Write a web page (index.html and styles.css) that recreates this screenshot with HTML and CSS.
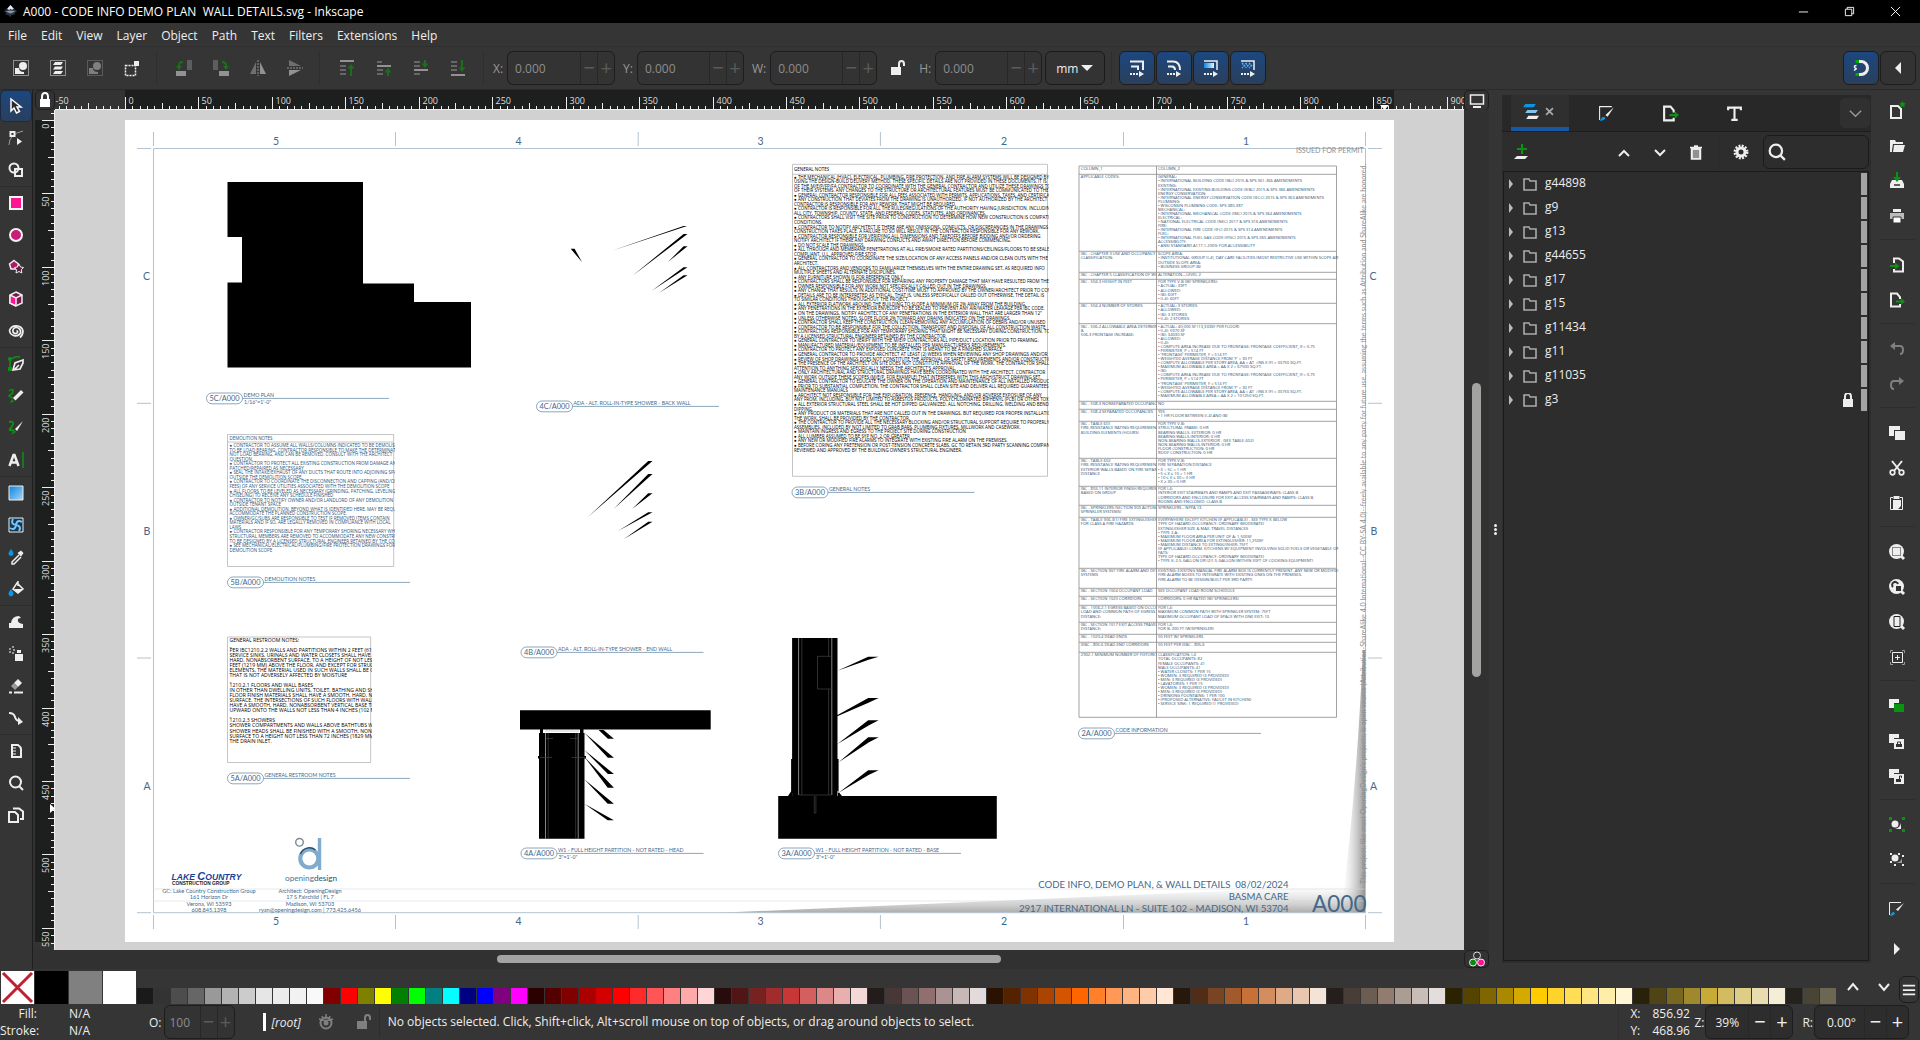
FILE: index.html
```html
<!DOCTYPE html>
<html lang="en">
<head>
<meta charset="utf-8">
<title>A000 - CODE INFO DEMO PLAN  WALL DETAILS.svg - Inkscape</title>
<link rel="stylesheet" href="styles.css">
</head>
<body>
<header class="titlebar">
  <svg class="app-logo" viewBox="0 0 16 16"><path d="M8 1 14.500 7.500Q15 9 12 9.500L13 11 9 12 8 14 6 12 2 11 4 9.500Q1 9 1.500 7.500Z" fill="#2c3440"/><path d="M8 1 11.500 5 9.500 6 8 5 6.500 6.500 4.500 5Z" fill="#e8edf2"/><path d="M3 8Q8 6 13 8L8 10Z" fill="#8796ab"/></svg>
  <h1>A000 - CODE INFO DEMO PLAN&nbsp; WALL DETAILS.svg - Inkscape</h1>
  <div class="win-buttons">
    <button aria-label="Minimize"><svg viewBox="0 0 12 12"><path d="M1 6.500H11" stroke="#fff"/></svg></button>
    <button aria-label="Restore"><svg viewBox="0 0 12 12"><path d="M1.500 3.500h7v7h-7zM3.500 3.500v-2h7v7h-2" fill="none" stroke="#fff"/></svg></button>
    <button aria-label="Close"><svg viewBox="0 0 12 12"><path d="M1 1 11 11M11 1 1 11" stroke="#fff"/></svg></button>
  </div>
</header>
<nav class="menubar">
  <button>File</button><button>Edit</button><button>View</button><button>Layer</button><button>Object</button><button>Path</button><button>Text</button><button>Filters</button><button>Extensions</button><button>Help</button>
</nav>

<div class="toolbar">
  <div class="group">
    <button aria-label="Select all"><svg viewBox="0 0 16 16"><path d="M.500.500h15v15H.500z" fill="none" stroke="#eee" stroke-dasharray="1 1"/><circle cx="10" cy="6" r="4" fill="#eee"/><path d="M2 8h4q0 4 5 4v2H2z" fill="#eee"/></svg></button>
    <button aria-label="Select in layers"><svg viewBox="0 0 16 16"><path d="M.500.500h15v15H.500z" fill="none" stroke="#eee" stroke-dasharray="1 1"/><path d="M5 2h8l-2 3H3zM5 6.500h8l-2 3H3zM5 11h8l-2 3H3z" fill="#eee"/></svg></button>
    <button class="dim" aria-label="Deselect"><svg viewBox="0 0 16 16"><path d="M.500.500h15v15H.500z" fill="none" stroke="#eee" stroke-dasharray="1 1"/><circle cx="10" cy="6" r="4" fill="#eee"/><path d="M2 8h4q0 4 5 4v2H2z" fill="#eee"/></svg></button>
    <button aria-label="Touch selection"><svg viewBox="0 0 16 16"><path d="M1.500 5.500h10v10h-10z" fill="none" stroke="#eee" stroke-width="1.500" stroke-dasharray="2 1"/><path d="M10 1h5v5h-5z" fill="#eee"/></svg></button>
  </div>
  <div class="group dim">
    <button aria-label="Rotate left"><svg viewBox="0 0 16 16"><path d="M11 0h5v10h-5z" fill="#888"/><path d="M0 11h10v5H0z" fill="#eee"/><path d="M3 9V5q0-3 4-3" fill="none" stroke="#0a0" stroke-width="2"/><path d="M0 6h6L3 10z" fill="#0a0"/></svg></button>
    <button aria-label="Rotate right"><svg viewBox="0 0 16 16"><path d="M0 0h5v10H0z" fill="#888"/><path d="M6 11h10v5H6z" fill="#eee"/><path d="M13 9V5q0-3-4-3" fill="none" stroke="#0a0" stroke-width="2"/><path d="M10 6h6l-3 4z" fill="#0a0"/></svg></button>
    <button aria-label="Flip horizontally"><svg viewBox="0 0 16 16"><path d="M6 2v12H0z" fill="#aaa"/><path d="M10 2v12h6z" fill="#eee"/><path d="M8 0v16" stroke="#eee" stroke-dasharray="2 1"/></svg></button>
    <button aria-label="Flip vertically"><svg viewBox="0 0 16 16"><path d="M2 6h12L2 0z" fill="#aaa"/><path d="M2 10h12L2 16z" fill="#eee"/><path d="M0 8h16" stroke="#eee" stroke-dasharray="2 1"/></svg></button>
  </div>
  <div class="group dim">
    <button aria-label="Raise to top"><svg viewBox="0 0 16 16"><path d="M1 1h14" stroke="#eee" stroke-width="2"/><path d="M1 6h6M1 10h6M1 14h6" stroke="#999" stroke-width="2"/><path d="M12 16V7" stroke="#0a0" stroke-width="2"/><path d="M8.500 8.500h7L12 4z" fill="#0a0"/></svg></button>
    <button aria-label="Raise"><svg viewBox="0 0 16 16"><path d="M1 2h5M1 10h6M1 14h6" stroke="#999" stroke-width="2"/><path d="M1 6h14" stroke="#eee" stroke-width="2"/><path d="M12 16v-4" stroke="#0a0" stroke-width="2"/><path d="M8.500 12.500h7L12 8z" fill="#0a0"/></svg></button>
    <button aria-label="Lower"><svg viewBox="0 0 16 16"><path d="M1 2h6M1 6h6M1 14h6" stroke="#999" stroke-width="2"/><path d="M1 10h14" stroke="#eee" stroke-width="2"/><path d="M12 0v4" stroke="#0a0" stroke-width="2"/><path d="M8.500 3.500h7L12 8z" fill="#0a0"/></svg></button>
    <button aria-label="Lower to bottom"><svg viewBox="0 0 16 16"><path d="M1 2h6M1 6h6M1 10h6" stroke="#999" stroke-width="2"/><path d="M1 15h14" stroke="#eee" stroke-width="2"/><path d="M12 0v9" stroke="#0a0" stroke-width="2"/><path d="M8.500 7.500h7L12 12z" fill="#0a0"/></svg></button>
  </div>
  <div class="group coords">
    <label for="px">X:</label><div class="spin off"><input id="px" value="0.000"><button aria-label="Less">&minus;</button><button aria-label="More">+</button></div>
    <label for="py">Y:</label><div class="spin off"><input id="py" value="0.000"><button aria-label="Less">&minus;</button><button aria-label="More">+</button></div>
    <label for="pw">W:</label><div class="spin off"><input id="pw" value="0.000"><button aria-label="Less">&minus;</button><button aria-label="More">+</button></div>
    <button class="ratio" aria-label="Lock ratio"><svg viewBox="0 0 16 16"><path d="M1 7h10v8H1z" fill="#eee"/><path d="M9 8V4q0-3 2.500-3T14 4v2" fill="none" stroke="#eee" stroke-width="2"/></svg></button>
    <label for="ph">H:</label><div class="spin off"><input id="ph" value="0.000"><button aria-label="Less">&minus;</button><button aria-label="More">+</button></div>
    <div class="unit"><select aria-label="Unit"><option>mm</option></select></div>
  </div>
  <div class="group toggles">
    <button class="on" aria-label="Scale stroke"><svg viewBox="0 0 16 16"><path d="M1 1.500h13V10M2 6.500h7V10" fill="none" stroke="#eee" stroke-width="2"/><path d="M1 14h9" stroke="#eee" stroke-width="2" stroke-dasharray="2 1"/><path d="M10 11v6l5-3z" fill="#eee"/></svg></button>
    <button class="on" aria-label="Scale corners"><svg viewBox="0 0 16 16"><path d="M1 1.500h6q7 0 7 8.500M2 6.500h4q3 0 3 3.500" fill="none" stroke="#eee" stroke-width="2"/><path d="M1 14h9" stroke="#eee" stroke-width="2" stroke-dasharray="2 1"/><path d="M10 11v6l5-3z" fill="#eee"/></svg></button>
    <button class="on" aria-label="Move gradients"><svg viewBox="0 0 16 16"><defs><linearGradient id="ga"><stop stop-color="#0a8ae6"/><stop offset="1" stop-color="#e6f2fb"/></linearGradient></defs><path d="M1 1h13v9" fill="none" stroke="#eee" stroke-width="1.500"/><path d="M1 3h10v5H1z" fill="url(#ga)"/><path d="M1 14h9" stroke="#eee" stroke-width="2" stroke-dasharray="2 1"/><path d="M10 11v6l5-3z" fill="#eee"/></svg></button>
    <button class="on" aria-label="Move patterns"><svg viewBox="0 0 16 16"><path d="M1 1h13v9" fill="none" stroke="#eee" stroke-width="1.500"/><path d="M2 3l2.500 2.500L2 8M5.500 3 8 5.500 5.500 8M9 3l2.500 2.500L9 8" fill="none" stroke="#5bb8f5" stroke-width="1.500" stroke-dasharray="2 1"/><path d="M1 14h9" stroke="#eee" stroke-width="2" stroke-dasharray="2 1"/><path d="M10 11v6l5-3z" fill="#eee"/></svg></button>
  </div>
  <div class="snap">
    <button class="on" aria-label="Snapping"><svg viewBox="0 0 16 16"><path d="M6 1.500h2a6.500 6.500 0 0 1 0 13H6" fill="none" stroke="#eee" stroke-width="3"/><path d="M2.500 0h3.500v3H2.500zM2.500 13h3.500v3H2.500z" fill="#0a0"/><path d="M3.500 5.500Q1 5.500 1.500 7T3 8.500 1 10.500" fill="none" stroke="#eee" stroke-width="1.500"/></svg></button>
    <button class="plain" aria-label="Snap options"><svg viewBox="0 0 16 16"><path d="M11 2v12L5 8z" fill="#eee"/></svg></button>
  </div>
</div>

<main class="workspace">
  <div class="toolbox">
    <div class="set">
      <button class="on" aria-label="Selector"><svg viewBox="0 0 16 16"><path d="M3 1v12l3-3 2.500 5 3-1.500L9 9h4z" fill="#2a2a2a" stroke="#fff" stroke-width="1.500"/></svg></button>
      <button aria-label="Node"><svg viewBox="0 0 16 16"><path d="M1 15Q1 4 15 1" fill="none" stroke="#999"/><path d="M2.500 2h4v4h-4z" fill="#333" stroke="#eee" stroke-width="2"/><path d="M9 8v7l5-3.500z" fill="#eee"/></svg></button>
      <button aria-label="Shape builder"><svg viewBox="0 0 16 16"><circle cx="6" cy="6" r="4.500" fill="none" stroke="#eee" stroke-width="2"/><path d="M7 7h7v7H7z" fill="none" stroke="#eee" stroke-width="2"/></svg></button>
    </div>
    <div class="set">
      <button aria-label="Rectangle"><svg viewBox="0 0 16 16"><rect x="2" y="2" width="12" height="12" fill="#ff1493" stroke="#f4f4f4" stroke-width="2"/></svg></button>
      <button aria-label="Ellipse"><svg viewBox="0 0 16 16"><circle cx="8" cy="8" r="6" fill="#c81d78" stroke="#f4f4f4" stroke-width="2"/></svg></button>
      <button aria-label="Star"><svg viewBox="0 0 16 16"><path d="M6 1.500 10.500 5 9 10H3L1.500 5Z" fill="#ab1a69" stroke="#eee" stroke-width="1.500"/><path d="m11 5 1.500 3 3 .500-2.200 2.300.500 3.200-2.800-1.500L8 14l.500-3.200L6.500 8.500l3-.500z" fill="#5a2342" stroke="#eee"/></svg></button>
      <button aria-label="3D box"><svg viewBox="0 0 16 16"><path d="m8 1 6 3v8l-6 3-6-3V4z" fill="#7a1a4d" stroke="#eee" stroke-width="1.500"/><path d="m2 4 6 3v8l-6-3z" fill="#ff1493"/><path d="m2 4 6 3 6-3M8 7v8M2 4v8l6 3" fill="none" stroke="#eee" stroke-width="1.500"/></svg></button>
      <button aria-label="Spiral"><svg viewBox="0 0 16 16"><path d="M12 14.500Q15 12 15 8A7 6.500 0 0 0 1.500 7.500a6 6 0 0 0 11 2.500A4.500 4.500 0 0 0 8 4.500 3.500 3.500 0 0 0 5 9q1.500 2.500 4 1 1.500-1.500-.500-2.500" fill="none" stroke="#eee" stroke-width="1.700"/></svg></button>
    </div>
    <div class="set">
      <button aria-label="Pen"><svg viewBox="0 0 16 16"><path d="M2 12V3M4 2.500Q8 0 12 1" fill="none" stroke="#0a9310" stroke-width="1.500"/><path d="M0 11h4v4H0z" fill="#0a9310"/><circle cx="2" cy="3" r="2" fill="#0a9310"/><path d="m15 4-8 3-2 7 7-1 3-6zM6 14l5-5" fill="#333" stroke="#eee" stroke-width="1.700"/></svg></button>
      <button aria-label="Pencil"><svg viewBox="0 0 16 16"><path d="M1 3q4-3 4 0T2 7t3 3" fill="none" stroke="#0a9310" stroke-width="1.500"/><path d="M13 2l2.500 2.500-8 8L5 10z" fill="#eee"/><path d="m4 11 2 2.500L2 15z" fill="#0a9310"/></svg></button>
      <button aria-label="Calligraphy"><svg viewBox="0 0 16 16"><path d="M1 2q5-1 4 2T2 9t4 1" fill="none" stroke="#0a9310" stroke-width="1.800"/><path d="M15 1 9 11l-2-2z" fill="#eee"/><path d="m6 10 2 2-5 3z" fill="#0a9310"/></svg></button>
      <button aria-label="Text"><svg viewBox="0 0 16 16"><path d="M15 0v16" stroke="#0a9310" stroke-width="1.500"/><path d="M1.500 14 5.500 3h1l4 11M3 10.500h6" fill="none" stroke="#eee" stroke-width="2.500"/></svg></button>
    </div>
    <div class="set">
      <button aria-label="Gradient"><svg viewBox="0 0 16 16"><defs><linearGradient id="gb" x2="1" y2="1"><stop stop-color="#0a84dd"/><stop offset="1" stop-color="#a9d5f5"/></linearGradient></defs><path d="M1 1h14v14H1z" fill="url(#gb)" stroke="#eee"/></svg></button>
      <button aria-label="Mesh"><svg viewBox="0 0 16 16"><path d="M1 1h14v14H1z" fill="#123a55" stroke="#eee"/><path d="M8 8Q2 7 5 2M8 8Q9 2 14 5M8 8q6 1 3 6M8 8Q7 14 2 11" fill="none" stroke="#7cc4f3" stroke-width="2"/></svg></button>
      <button aria-label="Dropper"><svg viewBox="0 0 16 16"><path d="M3 0q5 6 0 7-5-1 0-7" fill="#0a96e6"/><path d="m11 6-7 7v2h2l7-7" fill="none" stroke="#eee" stroke-width="1.500"/><path d="M13 1.500 15.500 4 13 7.500 9.500 4z" fill="#eee"/></svg></button>
      <button aria-label="Paint bucket"><svg viewBox="0 0 16 16"><path d="M3 8q5 6 0 7.500Q-2 14 3 8" fill="#0a96e6"/><path d="m9 2 6 6-5 4-5-4zM10 0v5" fill="none" stroke="#eee" stroke-width="1.500"/><path d="M6 8h9l-5 4z" fill="#eee"/></svg></button>
    </div>
    <div class="set">
      <button aria-label="Tweak"><svg viewBox="0 0 16 16"><path d="M1 14V9h2q1-7 8-7l2 2q-4 0-3 3 0 2 5 3v4z" fill="#eee"/></svg></button>
      <button aria-label="Spray"><svg viewBox="0 0 16 16"><path d="M7 8h8v7H7zM9 4h4v3H9z" fill="#eee"/><path d="M1 3h2M4 1h2M5 4h2M1 6h2M4 7h2" stroke="#999" stroke-width="2"/></svg></button>
      <button aria-label="Eraser"><svg viewBox="0 0 16 16"><path d="m10 1 4 4-4 4-4-4z" fill="#eee"/><path d="m6 5 4 4-3 3-4-4z" fill="#999"/><path d="M1 14.500h3M6 14.500h9" stroke="#eee" stroke-width="2"/></svg></button>
      <button aria-label="Connector"><svg viewBox="0 0 16 16"><path d="M1 3q5 0 6 4t5 4" fill="none" stroke="#eee" stroke-width="2"/><path d="M10 7v8l5-3z" fill="#eee"/></svg></button>
    </div>
    <div class="set">
      <button aria-label="Measure"><svg viewBox="0 0 16 16"><path d="M4 2h6q3 2 3 4v8H4z" fill="none" stroke="#eee" stroke-width="2"/><path d="M4 5h4M4 8h4M4 11h4" stroke="#eee"/></svg></button>
      <button aria-label="Zoom"><svg viewBox="0 0 16 16"><circle cx="7.500" cy="7" r="5.500" fill="none" stroke="#eee" stroke-width="2"/><path d="m11 11 4 4" stroke="#eee" stroke-width="2"/></svg></button>
      <button aria-label="Pages"><svg viewBox="0 0 16 16"><path d="M1 5h6l3 3v7H1zM5 1.500h6l4 3V12h-3" fill="none" stroke="#eee" stroke-width="2"/></svg></button>
    </div>
  </div>

  <section class="editor">
    <div class="ruler-row">
      <button class="corner" aria-label="Lock guides"><svg viewBox="0 0 16 16"><path d="M3 7h10v8H3z" fill="#fff"/><path d="M5 8V5q0-4 3-4t3 4v3" fill="none" stroke="#fff" stroke-width="2"/></svg></button>
      <svg class="hruler" id="hruler"></svg>
      <button class="corner" aria-label="Display mode"><svg viewBox="0 0 16 16"><path d="M1.500 2h13v9h-13z" fill="none" stroke="#eee" stroke-width="1.500"/><path d="M4 15v-2h8v2z" fill="#eee"/></svg></button>
    </div>
    <div class="canvas-row">
      <svg class="vruler" id="vruler"></svg>
      <div class="canvas">
        <svg class="sheet" id="sheet" viewBox="1250 1200 12690 8220">
          <defs>
            <linearGradient id="curlb" gradientUnits="userSpaceOnUse" x1="0" y1="9127" x2="0" y2="8860"><stop stop-color="#888" stop-opacity=".7"/><stop offset="1" stop-color="#ccc" stop-opacity="0"/></linearGradient>
            <linearGradient id="curlr" gradientUnits="userSpaceOnUse" x1="13655" y1="0" x2="13420" y2="0"><stop stop-color="#777" stop-opacity=".8"/><stop offset="1" stop-color="#ccc" stop-opacity="0"/></linearGradient>
            <clipPath id="c1"><path d="M2270 4340h1680v1330H2270z"/></clipPath>
            <clipPath id="c2"><path d="M2270 6360h1450v1270H2270z"/></clipPath>
            <clipPath id="c3"><path d="M7920 1630h2568v3140H7920z"/></clipPath>
            <clipPath id="c4"><path d="M10790 1660h775v5520h-775z"/></clipPath>
            <clipPath id="c5"><path d="M11565 1660h1818v5520h-1818z"/></clipPath>
          </defs>
          <path d="M1250 1200h12690v8220H1250z" fill="#fff"/>
          <path d="M7200 9127 13655 8850V9127Z" fill="url(#curlb)"/>
          <path d="M13630 6500Q13560 8000 13410 9127H13655V6500Z" fill="url(#curlr)"/>
          <path class="frame" d="M1535 9127V1485H13655V9127ZM1535 1320v140M3955 1320v140M6382 1320v140M8804 1320v140M11235 1320v140M13655 1320v140M1535 9150v140M3955 9150v140M6382 9150v140M8804 9150v140M11235 9150v140M13655 9150v140M1370 1485h140M1370 4033h140M1370 6580h140M1370 9127h140M13680 1485h140M13680 4033h140M13680 6580h140M13680 9127h140"/>
          <path class="dots" d="M1535 8890H13655M1535 9010H13655"/>
          <g class="mark"><text x="2760" y="1445">5</text><text x="5185" y="1445">4</text><text x="7605" y="1445">3</text><text x="10040" y="1445">2</text><text x="12460" y="1445">1</text><text x="2760" y="9245">5</text><text x="5185" y="9245">4</text><text x="7605" y="9245">3</text><text x="10040" y="9245">2</text><text x="12460" y="9245">1</text><text x="1465" y="2800">C</text><text x="1470" y="5350">B</text><text x="1470" y="7900">A</text><text x="13730" y="2800">C</text><text x="13740" y="5350">B</text><text x="13735" y="7900">A</text></g>
          <path d="M2275 1820H3630V2835H4140V3020H4710V3675H2275V2825H2420V2370H2275Z"/>
          <path d="M5707 2487h39l75 136zM6118 2507 6835 2260h36zM6325 2757 6836 2340h39zM6679 2620 6836 2463h39zM6514 2910 6836 2673h39zM6593 2927 6836 2753h39zM5879 5170 6482 4610h43zM6136 5090 6482 4740h43zM6321 5090 6482 4933h43zM6180 5310 6482 5123h43zM6240 5390 6482 5217h43z"/>
          <path d="M5200 7103h1907v192H5200zM5390 7330h455v1057h-455zM5400 7295h30v40h-30zM5800 7295h35v40h-35zM5380 7560h145v25h-145zM5715 7560h145v25h-145zM5986 7300h50l103 87h-60zM5843 7327l296 250h-60zM5843 7500l296 240h-60zM5843 7567l296 310h-62zM5843 7793l296 244h-62zM5843 8037l296 166h-62z"/>
          <path d="M7921 6380h454v1580h-454zM7911 7590h475v340h-475zM7782 7960h2186v427H7782zM7880 7960l40-60v60zM8420 7960l-50-60v60zM8375 6707 8682 6567h104l-100 30zM8286 7200 8682 6980h104l-96 45zM8375 7440 8682 7203h104l-96 50zM8386 7623 8682 7373h104l-96 50zM8386 7927 8682 7703h104l-96 45z"/>
          <path class="seam" d="M5455 7330V8387M5782 7330V8387M7986 6380V7950M8318 6380V7950M5450 7310H5790"/>
          <path class="seam faint" d="M5482 7330V8387M5757 7330V8387M8018 6380V7950M8286 6380V6563M8286 6890V7950M8318 6563H8175V6890H8318M8143 7960v170h16v-170M7990 7950H8310M5400 7575h120M5715 7575h140M5460 7385h70M5700 7385h70"/>
          <g class="boxes"><path d="M2275 4345h1662v1320H2275zM2275 4420h1662M2275 6370h1432v1255H2275zM7925 1643h2550v3120H7925zM7925 1743h2550"/></g>
          <path class="grid" id="grid"/>
          <g id="notes"></g>
          <g id="tags"></g>
          <text class="gothic grey" x="12960" y="1525" font-size="71">ISSUED FOR PERMIT</text>
          <text class="gothic grey" transform="translate(13655 8840) rotate(-90)" font-size="71" id="licence">This project, like most OpeningDesign's projects, is open source (Attribution-ShareAlike 4.0 International--CC BY-SA 4.0)--freely available to any party for future use, assuming the terms such as Attribution and ShareAlike are honored.</text>
          <g class="gothic end" font-size="96"><text x="12885" y="8882" xml:space="preserve">CODE INFO, DEMO PLAN, &amp; WALL DETAILS  08/02/2024</text><text x="12885" y="9003">BASMA CARE</text><text x="12885" y="9122">2917 INTERNATIONAL LN - SUITE 102 - MADISON, WI 53704</text><text x="13665" y="9115" font-size="226">A000</text></g>
          <g class="gothic mid" font-size="56"><text x="2090" y="8932">GC: Lake Country Construction Group</text><text x="2090" y="8993">161 Horizon Dr</text><text x="2090" y="9055">Verona, WI 53593</text><text x="2090" y="9117">608.845.1398</text><text x="3100" y="8932">Architect: OpeningDesign</text><text x="3100" y="8993">17 S Fairchild | FL 7</text><text x="3100" y="9055">Madison, WI 53703</text><text x="3100" y="9117">ryan@openingdesign.com | 773.425.6456</text></g>
          <g fill="none"><circle cx="3093" cy="8585" r="90" stroke="#7fabcf" stroke-width="42"/><path d="M3195 8380v320" stroke="#7fabcf" stroke-width="34"/><path d="M3005 8540a95 95 0 0 1 150-40" stroke="#2c4a60" stroke-width="14"/><circle cx="2995" cy="8423" r="38" stroke="#7a8b92" stroke-width="14"/></g>
          <text class="gothic" x="2850" y="8805" font-size="82"><tspan fill="#46789a">opening</tspan><tspan fill="#1b5275">design</tspan></text>
          <g class="lake"><text x="1715" y="8795" font-size="86">LAKE <tspan font-size="110">C</tspan>OUNTRY</text><text class="sub" x="1720" y="8845" font-size="48">CONSTRUCTION GROUP</text></g>
        </svg>
      </div>
      <div class="vscroll"><i></i></div>
    </div>
    <div class="scroll-row">
      <div class="hscroll"><i></i></div>
      <button class="corner" aria-label="Color managed view"><svg viewBox="0 0 16 16"><circle cx="8" cy="4.500" r="3.500" fill="none" stroke="#ddd"/><circle cx="4" cy="11.500" r="3.500" fill="#0a8a10" stroke="#eee"/><circle cx="12" cy="11.500" r="3.500" fill="#ff1493" stroke="#eee"/></svg></button>
    </div>
  </section>

  <div class="handle"><i></i><i></i><i></i></div>

  <aside class="dock">
    <div class="tabs">
      <button class="tab current" aria-label="Layers and Objects"><svg viewBox="0 0 16 16"><path d="M3 1h10l-2 3H1z" fill="#0a96e6"/><path d="M5 6.500h10l-2 3H3z" fill="#7cc4f3"/><path d="M6 12h10l-2 3H4z" fill="#eee"/></svg><span class="x"><svg viewBox="0 0 16 16"><path d="M3 3 13 13M13 3 3 13" stroke="#aaa" stroke-width="2.500"/></svg></span></button>
      <button class="tab" aria-label="Fill and Stroke"><svg viewBox="0 0 16 16"><path d="M1.500 14V1.500H13" fill="none" stroke="#eee"/><path d="m15 2-6 9-2-1.500z" fill="#eee"/><path d="M2 15q1-4 4-4l1 2q-2 2-5 2" fill="#0a96e6"/></svg></button>
      <button class="tab" aria-label="Export"><svg viewBox="0 0 16 16"><path d="M11 7V5L8 1.500H2v13h9V12" fill="none" stroke="#eee" stroke-width="2"/><path d="M7 9.500h6" stroke="#0a9310" stroke-width="2"/><path d="m12 6 4 3.500-4 3.500z" fill="#0a9310"/></svg></button>
      <button class="tab" aria-label="Text and Font"><svg viewBox="0 0 16 16"><path d="M2 5V2.500h12V5M8 2v12M5 14h6" fill="none" stroke="#eee" stroke-width="2"/></svg></button>
      <button class="tab more" aria-label="More dialogs"><svg viewBox="0 0 16 16"><path d="m2 5 6 6 6-6" fill="none" stroke="#999" stroke-width="1.500"/></svg></button>
    </div>
    <div class="layer-bar">
      <button class="add" aria-label="Add layer"><svg viewBox="0 0 16 16"><path d="M4 12h11l-3 3H1z" fill="#eee"/><path d="M9 0v10M4 5h10" stroke="#0a9310" stroke-width="2"/></svg></button>
      <button aria-label="Raise layer"><svg viewBox="0 0 16 16"><path d="m3 12 5-5 5 5" fill="none" stroke="#eee" stroke-width="2"/></svg></button>
      <button aria-label="Lower layer"><svg viewBox="0 0 16 16"><path d="m3 6 5 5 5-5" fill="none" stroke="#eee" stroke-width="2"/></svg></button>
      <button aria-label="Delete layer"><svg viewBox="0 0 16 16"><path d="M2 3.500h12M6 2h4M3.500 5h9v10h-9z" fill="#ddd" stroke="#eee" stroke-width="1.500"/><path d="M6 6v8M8 6v8M10 6v8" stroke="#444"/></svg></button>
      <button class="gear" aria-label="Settings"><svg viewBox="0 0 16 16"><circle cx="8" cy="8" r="6.200" fill="none" stroke="#eee" stroke-width="2.500" stroke-dasharray="1.900 1.345"/><circle cx="8" cy="8" r="4" fill="none" stroke="#eee" stroke-width="3"/></svg></button>
      <label class="search"><svg viewBox="0 0 16 16"><circle cx="7" cy="7" r="5.500" fill="none" stroke="#eee" stroke-width="2"/><path d="m11 11 4 4" stroke="#eee" stroke-width="2"/></svg><input aria-label="Search layers"></label>
    </div>
    <ul class="layers" id="layers"></ul>
  </aside>

  <div class="commands">
    <div class="set">
      <button aria-label="New"><svg viewBox="0 0 16 16"><path d="M2 3h7l3 3v9H2z" fill="none" stroke="#eee" stroke-width="2"/><path d="M13.500-2 14.500 0 17 .500 15.200 2 15.700 4.500 13.500 3.300 11.300 4.500 11.800 2 10 .500 12.500 0Z" fill="#0a9310"/></svg></button>
      <button aria-label="Open"><svg viewBox="0 0 16 16"><path d="M1 2h5l1 2h7v2H4l-1 6v2H1z" fill="#eee"/><path d="M5 7h11l-2 7H4z" fill="#eee"/></svg></button>
      <button aria-label="Save"><svg viewBox="0 0 16 16"><path d="M1 11l2-4h10l2 4v4H1z" fill="#eee"/><path d="M5 12h6" stroke="#333" stroke-width="1.500"/><path d="M8-1v6" stroke="#0a9310" stroke-width="2"/><path d="M4 4h8L8 9z" fill="#0a9310"/></svg></button>
      <button aria-label="Print"><svg viewBox="0 0 16 16"><path d="M4 1h8v3H4z" fill="#eee"/><path d="M1 5h14v6H1z" fill="#bbb"/><path d="M4 9h8v6H4z" fill="#fff" stroke="#333"/></svg></button>
    </div>
    <div class="set">
      <button aria-label="Import"><svg viewBox="0 0 16 16"><path d="M5 6V1.500h5l4 3v10H5V12" fill="none" stroke="#eee" stroke-width="2"/><path d="M1 9h6" stroke="#0a9310" stroke-width="2"/><path d="m6 5.500 4.500 3.500L6 12.500z" fill="#0a9310"/></svg></button>
      <button aria-label="Export"><svg viewBox="0 0 16 16"><path d="M11 7V5L8 1.500H2v13h9V12" fill="none" stroke="#eee" stroke-width="2"/><path d="M7 9.500h6" stroke="#0a9310" stroke-width="2"/><path d="m12 6 4 3.500-4 3.500z" fill="#0a9310"/></svg></button>
    </div>
    <div class="set">
      <button class="dim" aria-label="Undo"><svg viewBox="0 0 16 16"><path d="M5 5h6q3 0 3 4 0 4-3 4" fill="none" stroke="#eee" stroke-width="2"/><path d="M6 1v8L1 5z" fill="#eee"/></svg></button>
      <button class="dim" aria-label="Redo"><svg viewBox="0 0 16 16"><path d="M11 5H5Q2 5 2 9q0 4 3 4" fill="none" stroke="#eee" stroke-width="2"/><path d="M10 1v8l5-4z" fill="#eee"/></svg></button>
    </div>
    <div class="set">
      <button aria-label="Copy"><svg viewBox="0 0 16 16"><path d="M0 1h11v4H5v6H0z" fill="#eee"/><path d="M6 6h10v9H6z" fill="#eee"/></svg></button>
      <button aria-label="Cut"><svg viewBox="0 0 16 16"><path d="m3 1 8 10M13 1 5 11" stroke="#eee" stroke-width="2"/><circle cx="3.500" cy="12.500" r="2.300" fill="none" stroke="#eee" stroke-width="1.700"/><circle cx="12.500" cy="12.500" r="2.300" fill="none" stroke="#eee" stroke-width="1.700"/></svg></button>
      <button aria-label="Paste"><svg viewBox="0 0 16 16"><path d="M4 2.500H1.500v12h12v-12H11" fill="none" stroke="#eee"/><path d="M4.500 1h6v3h-6zM4 5h8v6l-3 3H4z" fill="#eee"/></svg></button>
    </div>
    <div class="set">
      <button aria-label="Zoom selection"><svg viewBox="0 0 16 16"><circle cx="7.500" cy="7.500" r="7.500" fill="#eee"/><path d="m11 11 4 4" stroke="#eee" stroke-width="3"/><path d="M3.500 3.500h8v8h-8z" fill="none" stroke="#222" stroke-dasharray="1 1"/></svg></button>
      <button aria-label="Zoom drawing"><svg viewBox="0 0 16 16"><circle cx="7.500" cy="7.500" r="7.500" fill="#eee"/><path d="m11 11 4 4" stroke="#eee" stroke-width="3"/><path d="M7 7h5v5H7z" fill="#333"/><path d="M4 8a3 3 0 1 1 5-3" fill="none" stroke="#333" stroke-width="2"/></svg></button>
      <button aria-label="Zoom page"><svg viewBox="0 0 16 16"><circle cx="7.500" cy="7.500" r="7.500" fill="#eee"/><path d="m11 11 4 4" stroke="#eee" stroke-width="3"/><path d="M5 2.500h6v10H5z" fill="none" stroke="#222"/></svg></button>
      <button aria-label="Zoom center page"><svg viewBox="0 0 16 16"><path d="M3.500 3.500h10v10h-10zM6 8.500h5M8.500 6v5" fill="none" stroke="#eee"/><path d="M1.500 4V1.500H4M13 1.500h2.500V4M1.500 13v2.500H4M13 15.500h2.500V13" fill="none" stroke="#999"/></svg></button>
    </div>
    <div class="set">
      <button aria-label="Duplicate"><svg viewBox="0 0 16 16"><path d="M0 1h10v4H5v5H0z" fill="#eee"/><path d="M5 6h10v8H5z" fill="#0a9310"/></svg></button>
      <button aria-label="Clone"><svg viewBox="0 0 16 16"><path d="M0 1h10v4H5v5H0z" fill="#eee"/><path d="M5 6h10v10H5z" fill="#eee"/><path d="M7 11h6v3H7z" fill="#333"/><path d="M8.500 11V9h3v2" fill="none" stroke="#333"/></svg></button>
      <button aria-label="Unlink clone"><svg viewBox="0 0 16 16"><path d="M0 1h10v4H5v5H0z" fill="#eee"/><path d="M5 6h10v10H5z" fill="#eee"/><path d="M7 11h5v3H7z" fill="#333"/><path d="M10.500 11V8h2v2" fill="none" stroke="#333"/></svg></button>
    </div>
    <div class="set">
      <button aria-label="Group"><svg viewBox="0 0 16 16"><path d="M0 0h3v3H0zM13 0h3v3h-3zM0 12h3v3H0zM13 12h3v3h-3z" fill="#0a9310"/><circle cx="6" cy="7" r="3.500" fill="#eee"/><path d="M12 6v6H6q5-1 6-6" fill="#eee"/></svg></button>
      <button aria-label="Ungroup"><svg viewBox="0 0 16 16"><path d="M1 1h2v2H1zM9 1h2v2H9zM13 3h2v2h-2zM1 9h2v2H1zM5 12h2v2H5zM13 12h2v2h-2z" fill="#eee"/><circle cx="6" cy="6" r="3.500" fill="#eee"/><path d="M13 6v5H7q5-1 6-5" fill="#999"/></svg></button>
    </div>
    <div class="set">
      <button aria-label="Fill and Stroke"><svg viewBox="0 0 16 16"><path d="M.500 14V1.500H12" fill="none" stroke="#eee"/><path d="m15 2-6 8-2-1.500z" fill="#eee"/><path d="M1 15q1-4 4-4l1 2q-2 2-5 2" fill="#0a96e6"/></svg></button>
    </div>
    <button class="expand" aria-label="More commands"><svg viewBox="0 0 16 16"><path d="M5 2v12l6-6z" fill="#eee"/></svg></button>
  </div>
</main>

<div class="palette">
  <div class="big"><button class="none" aria-label="None"><svg viewBox="0 0 33 33"><path d="M2 2 31 31M31 2 2 31" stroke="#be2032" stroke-width="3"/></svg></button><button class="black" aria-label="Black"></button><button class="mid-grey" aria-label="Gray"></button><button class="white" aria-label="White"></button></div>
  <div class="swatches" id="swatches"></div>
  <div class="pal-ctl">
    <button aria-label="Previous colors"><svg viewBox="0 0 16 16"><path d="m3 11 5-6 5 6" fill="none" stroke="#eee" stroke-width="2"/></svg></button>
    <button aria-label="Next colors"><svg viewBox="0 0 16 16"><path d="m3 5 5 6 5-6" fill="none" stroke="#eee" stroke-width="2"/></svg></button>
    <button class="burger" aria-label="Palette menu"><svg viewBox="0 0 16 16"><path d="M1 3h14M1 8h14M1 13h14" stroke="#eee" stroke-width="2"/></svg></button>
  </div>
</div>

<footer class="status">
  <dl class="style"><dt>Fill:</dt><dd>N/A</dd><dt>Stroke:</dt><dd>N/A</dd></dl>
  <label for="op">O:</label><div class="spin off small"><input id="op" value="100"><button aria-label="Less">&minus;</button><button aria-label="More">+</button></div>
  <span class="layer-mark"></span><em>[root]</em>
  <button class="dim eye" aria-label="Toggle visibility"><svg viewBox="0 0 16 16"><circle cx="8" cy="9" r="5.500" fill="none" stroke="#eee" stroke-width="2"/><circle cx="8" cy="9" r="2.500" fill="#eee"/><path d="M1 5q7 3 14 0M8 0v5M4 2l1 3M12 2l-1 3" fill="none" stroke="#eee" stroke-width="1.500"/></svg></button>
  <button class="dim" aria-label="Toggle lock"><svg viewBox="0 0 16 16"><path d="M1 7h10v8H1z" fill="#eee"/><path d="M9 8V4q0-3 2.500-3T14 4v2" fill="none" stroke="#eee" stroke-width="2"/></svg></button>
  <p class="hint">No objects selected. Click, Shift+click, Alt+scroll mouse on top of objects, or drag around objects to select.</p>
  <dl class="pos"><dt>X:</dt><dd>856.92</dd><dt>Y:</dt><dd>468.96</dd></dl>
  <label for="zm">Z:</label><div class="spin zoom"><input id="zm" value="39%"><button aria-label="Less">&minus;</button><button aria-label="More">+</button></div>
  <label class="rl" for="rt">R:</label><div class="spin rot"><input id="rt" value="0.00°"><button aria-label="Less">&minus;</button><button aria-label="More">+</button></div>
</footer>
<script src="app.js"></script>
</body>
</html>
```
FILE: styles.css
```css
* { box-sizing: border-box; }
html, body { height: 100%; margin: 0; }
body { display: flex; flex-direction: column; background: #353535; color: #eee; font: 12px "Open Sans", "Noto Sans", sans-serif; overflow: hidden; }
button { display: flex; align-items: center; justify-content: center; padding: 0; border: 0; background: none; color: inherit; font: inherit; flex: none; }
button svg { width: 16px; height: 16px; display: block; overflow: visible; flex: none; }
input, select { font: inherit; color: inherit; background: none; border: 0; padding: 0; outline: 0; min-width: 0; }
.dim { opacity: .4; }

.titlebar { display: flex; align-items: center; flex: none; height: 23px; background: #000; padding-left: 3px; }
.app-logo { width: 15px; height: 15px; }
.titlebar h1 { margin: 0 0 0 5px; font-size: 12px; font-weight: 400; flex: 1; color: #fff; }
.win-buttons { display: flex; padding-right: 2px; }
.win-buttons button { width: 46px; height: 20px; }
.win-buttons svg { width: 11px; height: 11px; }

.menubar { display: flex; flex: none; height: 24px; padding-left: 1px; border-bottom: 1px solid #2f2f2f; font-size: 12px; }
.menubar button { padding: 0 7px; height: 24px; }

.toolbar { display: flex; align-items: center; flex: none; height: 43px; padding: 0 4px 0 2px; border-bottom: 1px solid #2a2a2a; }
.group { display: flex; align-items: center; }
.group > button { width: 37px; height: 34px; margin-right: 0; }
.group.dim { opacity: 1; border-left: 1px solid #2e2e2e; padding-left: 8px; margin-left: 6px; }
.group.dim svg { opacity: .5; }
.coords { border-left: 1px solid #2e2e2e; margin-left: 7px; padding-left: 9px; }
.coords label { color: #999; padding-right: 4px; }
.coords .spin + label { padding-left: 8px; }
.coords .ratio { width: 42px; }
.spin { display: flex; align-items: center; height: 34px; width: 108px; border: 1px solid #1d1d1d; border-radius: 6px; background: #2d2d2d; overflow: hidden; flex: none; }
.spin input { flex: 1; width: 0; padding-left: 7px; }
.spin button { width: 17px; height: 32px; border-left: 1px solid #282828; font-size: 20px; line-height: 20px; }
.off { background: #333; color: #8d8d8d; }
.off button { color: #5b5b5b; }
.coords .spin ~ .spin { width: 107px; }
.unit { position: relative; margin-left: 3px; }
.unit select { appearance: none; width: 60px; height: 34px; padding-left: 10px; border: 1px solid #1a1a1a; border-radius: 6px; background: #333; }
.unit::after { content: ""; position: absolute; right: 12px; top: 14px; border: 6px solid transparent; border-top-color: #eee; border-bottom: 0; pointer-events: none; }
.toggles { gap: 1px; border-left: 1px solid #2e2e2e; margin-left: 6px; padding-left: 7px; }
.toolbar .on, .toolbar .plain { width: 36px; height: 34px; border: 1px solid #1d1d1d; border-radius: 6px; }
.on { background: linear-gradient(#1c477f, #2a3f5c); }
.plain { background: #333; }
.snap { display: flex; gap: 1px; margin-left: auto; }

.workspace { display: flex; flex: 1; min-height: 0; }
.toolbox { width: 33px; flex: none; border-right: 1px solid #1e1e1e; }
.toolbox .set { border-bottom: 1px solid #2d2d2d; }
.toolbox .set:last-child { border: 0; }
.toolbox button { width: 32px; height: 32px; border-radius: 5px; }
.toolbox .on { border: 1px solid #1a2a40; }

.editor { flex: 1; min-width: 0; display: flex; flex-direction: column; padding-left: 2px; background: #333; }
.ruler-row { display: flex; height: 20px; flex: none; }
.corner { width: 25px; height: 21px; border: 1px solid #1e1e1e; border-radius: 5px; background: #333; position: relative; }
.ruler-row .corner:first-child { width: 20px; height: 20px; }
.hruler { flex: 1; min-width: 0; height: 20px; display: block; background: #333; }
.canvas-row { display: flex; flex: 1; min-height: 0; }
.vruler { width: 20px; height: 100%; display: block; background: #333; flex: none; }
.hruler text, .vruler text { font-size: 9px; fill: #ddd; }
.canvas { flex: 1; min-width: 0; position: relative; overflow: hidden; background: #d1d1d1; }
.sheet { position: absolute; left: 70px; top: 10px; width: 1269px; display: block; }
.vscroll { width: 25px; position: relative; background: #313131; flex: none; }
.vscroll i { position: absolute; left: 8px; width: 9px; top: 32.5%; height: 35%; border-radius: 5px; background: #a3a3a1; }
.scroll-row { display: flex; height: 19px; flex: none; }
.hscroll { flex: 1; position: relative; background: #313131; }
.hscroll i { position: absolute; top: 5px; height: 8px; left: 32.3%; width: 35.3%; border-radius: 5px; background: #a3a3a1; }
.scroll-row .corner { height: 18px; }
.handle { width: 13px; flex: none; display: flex; flex-direction: column; align-items: center; justify-content: center; gap: 1px; }
.handle i { width: 3px; height: 3px; border-radius: 2px; background: #eee; }

.frame { fill: none; stroke: #b4c3cf; stroke-width: 10; }
.dots { fill: none; stroke: #c9d6de; stroke-width: 12; stroke-dasharray: 10 10; }
.gothic, .mark { font-family: Lato, "Open Sans", sans-serif; fill: #44688a; }
.mark { font-size: 105px; text-anchor: middle; }
.grey { fill: #8d8f91; }
.end { text-anchor: end; }
.mid { text-anchor: middle; }
.seam { fill: none; stroke: #bbb; stroke-width: 7; }
.faint { stroke: #444; }
.boxes { fill: none; stroke: #b5b5b5; stroke-width: 8; }
.grid { fill: none; stroke: #8a8a8a; stroke-width: 8; }
.notes { font-family: "Open Sans", "Noto Sans", sans-serif; fill: #000; }
.blue { fill: #2c5274; }
.tag { fill: none; stroke: #6f90ab; stroke-width: 8; }
.lake { font-family: "Liberation Sans", sans-serif; font-weight: 700; font-style: italic; fill: #1c3f94; }
.lake .sub { font-style: normal; fill: #222; }

.dock { display: flex; flex-direction: column; width: 369px; flex: none; margin: 5px 0 6px; background: #2d2d2d; }
.tabs { display: flex; height: 37px; flex: none; padding-left: 9px; background: #282828; border-bottom: 1px solid #1d1d1d; }
.tab { width: 68px; height: 36px; }
.tab svg { width: 17px; height: 17px; }
.tab:nth-child(2) { margin-left: 3px; }
.tab:nth-child(3) { width: 60px; }
.current { width: 58px; gap: 5px; padding-right: 3px; background: #2f2f2f; border-bottom: 4px solid #1857a5; }
.current .x svg { width: 11px; height: 11px; }
.more { width: 30px; height: 30px; margin: 3px 1px 0 auto; border-radius: 5px; background: #303030; }
.more svg { width: 15px; height: 15px; }
.layer-bar { display: flex; align-items: center; height: 39px; flex: none; padding: 0 2px 0 1px; }
.layer-bar button { width: 36px; height: 36px; }
.layer-bar .add { margin-right: 67px; }
.layer-bar .gear { width: 44px; border-left: 1px solid #292929; margin-left: 4px; }
.search { display: flex; align-items: center; flex: 1; height: 34px; padding-left: 4px; margin-left: 1px; border: 1px solid #1b1b1b; border-radius: 6px; }
.search svg { width: 18px; height: 18px; }
.search input { flex: 1; width: 0; }
.layers { flex: 1; margin: 0 2px 2px 1px; padding: 0; list-style: none; border: 1px solid #1b1b1b; }
.layers li { display: flex; align-items: center; height: 24px; padding: 0 1px 0 3px; }
.layers svg { width: 14px; height: 14px; }
.layers .tri { width: 8px; height: 10px; margin-right: 8px; }
.layers span { flex: 1; padding-left: 8px; line-height: 20px; padding-bottom: 2px; }
.layers .lock { margin-right: 6px; }
.layers i { width: 6px; height: 22px; background: #a3a3a3; }

.commands { width: 49px; flex: none; padding: 3px 5px 0 8px; }
.commands .set { border-bottom: 1px solid #2d2d2d; padding-bottom: 6px; margin-bottom: 7px; }
.commands .set:nth-last-child(2) { border: 0; margin: 0; padding-bottom: 5px; }
.commands button { width: 36px; height: 35px; }

.palette { display: flex; align-items: flex-end; flex: none; height: 35px; padding: 0 1px 0 1px; }
.big { display: flex; gap: 1px; margin-right: 1px; }
.big button { width: 33px; height: 33px; }
.big .none, .white { background: #fff; }
.none svg { width: 33px; height: 33px; }
.black { background: #000; }
.mid-grey { background: #808080; }
.swatches { display: flex; gap: 1px; flex: 1; }
.swatches i { flex: 0 0 16px; height: 16px; }
.pal-ctl { display: flex; align-items: center; height: 35px; }
.pal-ctl button { width: 31px; height: 27px; }
.pal-ctl .burger { width: 20px; border: 1px solid #1d1d1d; border-radius: 6px; margin-top: 6px; }
.burger svg { width: 14px; height: 16px; }

.status { display: flex; align-items: center; flex: none; height: 36px; }
.status dl { display: grid; grid-template-columns: 37px 1fr; margin: 0; line-height: 17px; }
.status dd { margin: 0; }
.style { width: 149px; column-gap: 32px; }
.style dt { text-align: right; }
.status .spin { margin-left: 2px; }
.status .small { width: 71px; }
.status .small input { padding-left: 5px; }
.layer-mark { width: 3px; height: 18px; background: #fff; margin: 0 6px 0 28px; }
.status .eye { margin: 0 22px 0 17px; }
.hint { margin: 0 0 0 7px; padding-left: 8px; border-left: 1px solid #2d2d2d; flex: 1; line-height: 32px; white-space: nowrap; }
.pos { width: 76px; padding-left: 11px; border-left: 1px solid #2f2f2f; }
.status .pos { grid-template-columns: 22px 1fr; }
.status .spin.zoom { width: 88px; margin-left: 1px; }
.status .spin.rot { width: 95px; margin: 0 11px 0 1px; }
.zoom button, .rot button { width: 22px; }
.zoom input { padding-left: 9px; }
.rot input { padding-left: 12px; }
.rl { padding-left: 9px; }
```
FILE: app.js
```js
const NS = 'http://www.w3.org/2000/svg';
const add = (parent, name, attrs, text) => {
  const el = document.createElementNS(NS, name);
  for (const k in attrs) el.setAttribute(k, attrs[k]);
  if (text !== undefined) el.textContent = text;
  parent.appendChild(el);
  return el;
};

// Rulers: 50 mm per labelled tick, ten subdivisions each
const STEP = 73.44;
const h = document.getElementById('hruler');
const v = document.getElementById('vruler');
add(h, 'rect', { x: 70, y: 0, width: 1269, height: 20, fill: '#1d1f1f' });
add(v, 'rect', { x: 0, y: 10, width: 20, height: 822, fill: '#1d1f1f' });
let hd = '', vd = '';
for (let i = -10; i < 190; i++) {
  const len = i % 10 === 0 ? 12 : i % 5 === 0 ? 6 : 3;
  const x = Math.round(70 + i * STEP / 10) + 0.5;
  const y = Math.round(10 + i * STEP / 10) + 0.5;
  hd += `M${x} 19v${-len}`;
  if (y > 0) vd += `M19 ${y}h${-len}`;
  if (i % 10 === 0) {
    if (i <= 180) add(h, 'text', { x: Math.max(0, x + 3), y: 14 }, i * 5);
    if (i >= 0 && i <= 110) add(v, 'text', { transform: `translate(14 ${y + 3}) rotate(-90)`, 'text-anchor': 'end' }, i * 5);
  }
}
add(h, 'path', { d: hd + 'M0 19.5H2000', stroke: '#eee' });
add(v, 'path', { d: vd + 'M19.5 0V2000', stroke: '#eee' });
add(h, 'path', { d: 'M1325 15h9l-4.5 5z', fill: '#fff' });
add(v, 'path', { d: 'M15 694v9l5-4.5z', fill: '#fff' });

// Sheet notes
const notes = document.getElementById('notes');
const block = (x, y, size, pitch, cls, clip, lines) => {
  const g = add(notes, 'g', { class: 'notes ' + cls, 'font-size': size, 'clip-path': `url(#${clip})` });
  lines.forEach((t, i) => add(g, 'text', { x, y: y + i * pitch }, t));
};
const demo = `● CONTRACTOR TO ASSUME ALL WALLS/COLUMNS INDICATED TO BE DEMOLISHED
TO BE LOAD BEARING. CONTRACTOR RESPONSIBLE TO MAKE THE DETERMINATION
NOT LOAD BEARING, AND CAN BE REMOVED. CONSULT WITH THE ARCHITECT
QUESTION.
● CONTRACTOR TO PROTECT ALL EXISTING CONSTRUCTION FROM DAMAGE AND
PATCHED/REPAIRED AS NECESSARY
● SEAL THE INTAKE/EXHAUST OF ANY DUCTS THAT ROUTE INTO ADJOINING SPACE
OUTSIDE THE DEMOLITION SCOPE.
● CONTRACTOR TO COORDINATE THE DISCONNECTION AND CAPPING (AND/OR
FEES) OF ANY SERVICE UTILITIES ASSOCIATED WITH THE DEMOLITION SCOPE
● ALL FLOORS TO BE LEVELED AS NECESSARY (GRINDING, PATCHING, LEVELING,
CHISELING) TO RECEIVE ANY SCHEDULE FINISHED
● CONTRACTOR TO NOTIFY OWNER AND/OR LANDLORD OF ANY DEMOLITION
OUTSIDE TENANT SPACE
● ADDITIONAL DEMOLITION, BEYOND WHAT IS IDENTIFIED HERE, MAY BE REQUIRED
ACCOMMODATE THE PLANNED CONSTRUCTION SCOPE.
● OWNER/GC/SUBS ARE RESPONSIBLE TO TEST IF REMOVED ITEMS CONTAIN
MATERIALS AND IF SO, ARE LEGALLY REMOVED IN COMPLIANCE WITH LOCAL
LAWS
● CONTRACTOR RESPONSIBLE FOR ANY TEMPORARY SHORING NECESSARY WHEN
STRUCTURAL MEMBERS ARE REMOVED TO ACCOMMODATE ANY NEW CONSTRUCTION
TO BE DESIGNED BY A LICENSED STRUCTURAL ENGINEER RETAINED BY THE CONTRACTOR
● SEE MECHANICAL/ELECTRICAL/PLUMBING/FIRE PROTECTION DRAWINGS FOR
DEMOLITION SCOPE`.split('\n');
const restroom = `GENERAL RESTROOM NOTES:
_
PER IBC1210.2.2 WALLS AND PARTITIONS WITHIN 2 FEET (610 MM)
SERVICE SINKS, URINALS AND WATER CLOSETS SHALL HAVE A
HARD, NONABSORBENT SURFACE, TO A HEIGHT OF NOT LESS THAN
FEET (1219 MM) ABOVE THE FLOOR, AND EXCEPT FOR STRUCTURAL
ELEMENTS, THE MATERIAL USED IN SUCH WALLS SHALL BE OF A
THAT IS NOT ADVERSELY AFFECTED BY MOISTURE
_
1210.2.1 FLOORS AND WALL BASES
IN OTHER THAN DWELLING UNITS, TOILET, BATHING AND SHOWER
FLOOR FINISH MATERIALS SHALL HAVE A SMOOTH, HARD, NON
SURFACE. THE INTERSECTIONS OF SUCH FLOORS WITH WALLS
HAVE A SMOOTH, HARD, NONABSORBENT VERTICAL BASE THAT
UPWARD ONTO THE WALLS NOT LESS THAN 4 INCHES (102 MM)
_
1210.2.3 SHOWERS
SHOWER COMPARTMENTS AND WALLS ABOVE BATHTUBS WITH
SHOWER HEADS SHALL BE FINISHED WITH A SMOOTH, NONABSORBENT
SURFACE TO A HEIGHT NOT LESS THAN 72 INCHES (1829 MM)
THE DRAIN INLET.`.split('\n');
const general = `● THE MECHANICAL (HVAC), ELECTRICAL, PLUMBING, FIRE PROTECTION, AND FIRE ALARM SYSTEMS WILL BE DESIGNED BY
USING THE DESIGN-BUILD DELIVERY METHOD. THESE SPECIFIC DETAILS ARE NOT PROVIDED IN THESE DOCUMENTS. IT IS
OF THE M/E/P/FP/FA CONTRACTOR TO COORDINATE WITH THE GENERAL CONTRACTOR AND UTILIZE THESE DRAWINGS TO
OF THEIR SYSTEMS. ANY CHANGES TO THE STRUCTURE OR ARCHITECTURAL FEATURES MUST BE COMMUNICATED TO THE
● GENERAL CONTRACTOR RESPONSIBLE FOR ALL FEES ASSOCIATED WITH PERMITS, APPLICATIONS, TAXES, AND CERTIFICATES
● ANY CONSTRUCTION THAT DEVIATES FROM THE DRAWING IS UNAUTHORIZED, IF NOT AUTHORIZED BY THE ARCHITECT
CONTRACTOR IS RESPONSIBLE FOR ANY REWORK THAT MIGHT BE REQUIRED.
● CONTRACTOR IS RESPONSIBLE FOR ALL THE RULES/REGULATIONS OF THE AUTHORITY HAVING JURISDICTION. INCLUDING
ALL CITY, TOWNSHIP, COUNTY, STATE, AND FEDERAL CODES, STATUTES, AND ORDINANCES.
● CONTRACTORS SHALL VISIT THE SITE PRIOR TO CONSTRUCTION TO DETERMINE HOW NEW CONSTRUCTION IS COMPATIBLE
CONDITIONS.
● CONTRACTOR TO NOTIFY ARCHITECT IF THERE ARE ANY OMISSIONS, CONFLICTS, OR DISCREPANCIES IN THE DRAWINGS
CONSTRUCTION TAKES PLACE. A FAILURE TO SO WILL RESULT IN THE CONTRACTOR RESPONSIBLE FOR ANY REWORK.
● CONTRACTOR RESPONSIBLE FOR VERIFYING ALL DIMENSIONS AND TAKEOFFS BEFORE BIDDING AND/OR ORDERING
NOTIFY ARCHITECT IF THERE ANY DRAWING CONFLICTS AND AWAIT DIRECTION BEFORE COMMENCING.
● DO NOT SCALE THE DRAWINGS.
● ALL THROUGH AND MEMBRANE PENETRATIONS AT ALL FIRE/SMOKE RATED PARTITIONS/CEILINGS/FLOORS TO BE SEALED
COMPLIANT, U.L. APPROVED FIRE STOP.
● GENERAL CONTRACTOR TO COORDINATE THE SIZE/LOCATION OF ANY ACCESS PANELS AND/OR CLEAN OUTS WITH THE
ARCHITECT.
● ALL CONTRACTORS AND VENDORS TO FAMILIARIZE THEMSELVES WITH THE ENTIRE DRAWING SET, AS REQUIRED INFO
MULTIPLE SHEETS AND ALTERNATE DISCIPLINES.
● ANY FURNITURE SHOWN IS FOR REFERENCE ONLY.
● CONTRACTORS SHALL BE RESPONSIBLE FOR REPAIRING ANY PROPERTY DAMAGE THAT MAY HAVE RESULTED FROM THE
● OWNER RESPONSIBLE FOR ANY WORK NOT SPECIFICALLY CALLED OUT IN THE DRAWINGS.
● ANY CHANGE THAT RESULTS IN ADDITIONAL COST/TIME MUST TO APPROVED BY THE OWNER/ARCHITECT PRIOR TO CON
● DETAILS ARE TO BE INTERPRETED AS TYPICAL. THAT IS, UNLESS SPECIFICALLY CALLED OUT OTHERWISE, THE DETAIL IS
TO SIMILAR CONDITIONS THROUGHOUT THE PROJECT.
● ALL EXTERIOR FLATWORK AROUND THE BUILDING TO SLOPE A MINIMUM OF 2% AWAY FROM THE BUILDING.
● ANY PENETRATIONS IN THE EXTERIOR ENVELOPE TO BE SEALED TO PREVENT ANY AIR/WATER LEAKAGE PER IBC CODE.
● ON THE DRAWINGS, NOTIFY ARCHITECT OF ANY PENETRATIONS IN THE EXTERIOR WALL THAT ARE LARGER THAN 12"
● UNLESS OTHERWISE NOTED, SLOPE FLOOR 2% TOWARD ANY DRAINS INDICATED ON THE DRAWINGS.
● CONTRACTOR SHALL KEEP THE CONSTRUCTION CLEAN-REMOVING ANY ACCUMULATION OF DEBRIS AND/OR UNUSED
● CONTRACTOR TO BE RESPONSIBLE FOR THE COLLECTION, TRANSPORT AND DISPOSAL OF ALL CONSTRUCTION WASTE
● CONTRACTORS RESPONSIBLE FOR ANY TEMPORARY SHORING THAT MIGHT BE NECESSARY DURING CONSTRUCTION. TO
BY A LICENSED STRUCTURAL ENGINEER RETAINED BY THE CONTRACTOR.
● GENERAL CONTRACTOR TO VERIFY WITH THE M/E/P CONTRACTORS ALL PIPE/DUCT LOCATION PRIOR TO FRAMING.
● MANUFACTURED MATERIAL/EQUIPMENT TO BE INSTALLED PER MANUFACTURER'S REQUIREMENTS.
● CONTRACTOR TO PROTECT ANY EXPOSED CONCRETE THAT IS MEANT TO BE A FINISHED SURFACE.
● GENERAL CONTRACTOR TO PROVIDE ARCHITECT AT LEAST (2) WEEKS WHEN REVIEWING ANY SHOP DRAWINGS AND/OR
● REVIEW OF SHOP DRAWINGS DOES NOT CONSTITUTE THE APPROVAL OF SAFETY REQUIREMENTS AND/OR CONSTRUCTION
● THE PRESENCE OF THE ARCHITECT ON SITE DOES NOT CONSTITUTE APPROVAL OF THE WORK. THE CONTRACTOR SHALL
ATTENTION TO ANYTHING SPECIFICALLY NEEDS THE ARCHITECT'S APPROVAL.
● ONLY ARCHITECTURAL AND STRUCTURAL DRAWINGS HAVE BEEN COORDINATED WITH THE ARCHITECT. CONTRACTOR
ANY WORK OUTSIDE THESE SCOPES (M/E/P, FOR EXAMPLE) THAT INTERFERES WITH THIS ARCH/STRUCT DRAWING SET.
● GENERAL CONTRACTOR TO EDUCATE THE OWNER ON THE OPERATION AND MAINTENANCE OF ALL INSTALLED PRODUCTS
● PRIOR TO SUBSTANTIAL COMPLETION, THE CONTRACTOR SHALL CLEAN SITE AND DELIVER ALL REQUIRED GUARANTEES
MAINTENANCE MANUALS
● ARCHITECT NOT RESPONSIBLE FOR THE EXPLORATION, PRESENCE, HANDLING, AND/OR ADVERSE EXPOSURE OF ANY
ANY FROM, INCLUDING, BUT NOT LIMITED TO ASBESTOS PRODUCTS, POLYCHLORINATED BIPHENYL (PCB) OR OTHER TOXIC
● ALL EXTERIOR STRUCTURAL STEEL SHALL BE HOT DIPPED GALVANIZED. ALL NOTCHING, DRILLING, WELDING AND BENDING
DIPPING.
● ANY PRODUCT OR MATERIALS THAT ARE NOT CALLED OUT IN THE DRAWINGS, BUT REQUIRED FOR PROPER INSTALLATION
THE WORK, SHALL BE PROVIDED BY THE CONTRACTOR.
● THE CONTRACTOR TO PROVIDE ALL THE NECESSARY BLOCKING AND/OR STRUCTURAL SUPPORT REQUIRE TO PROPERLY
ASSEMBLIES, INCLUDED BY NOT LIMITED TO GRAB BARS, PLUMBING FIXTURES, MILLWORK AND CASEWORK.
● MAINTAIN INGRESS AND EGRESS TO THE PROJECT SITE DURING CONSTRUCTION
● ALL LUMBER ASSUMED TO BE SYP NO. 2 OR GREATER
● ANY NEW OR MODIFIED FIRE ALARMS TO INTEGRATE WITH EXISTING FIRE ALARM ON THE PREMISES.
● BEFORE CORING ANY PRETENSION OR POST-TENSION CONCRETE SLABS, GC TO RETAIN 3RD PARTY SCANNING COMPANY
REVIEWED AND APPROVED BY THE BUILDING OWNER'S STRUCTURAL ENGINEER.`.split('\n');
block(2295, 4396, 45, 0, 'blue', 'c1', ['DEMOLITION NOTES']);
block(2295, 4470, 45, 45.5, 'blue', 'c1', demo);
block(2295, 6416, 51, 50.5, '', 'c2', restroom);
block(7940, 1705, 45, 0, '', 'c3', ['GENERAL NOTES']);
block(7940, 1785, 45, 45.5, '', 'c3', general);

// Code information schedule: top edge, left cell, right cell
const rows = [
  [1660, 'COLUMN_1', 'COLUMN_2'],
  [1743, 'APPLICABLE CODES:', `GENERAL:
• INTERNATIONAL BUILDING CODE (IBC) 2015 & SPS 361-366 AMENDMENTS
EXISTING:
• INTERNATIONAL EXISTING BUILDING CODE (IEBC) 2015 & SPS 366 AMENDMENTS
ENERGY CONSERVATION:
• INTERNATIONAL ENERGY CONSERVATION CODE (IECC) 2015 & SPS 363 AMENDMENTS
PLUMBING:
• WISCONSIN PLUMBING CODE: SPS 380-387
MECHANICAL:
• INTERNATIONAL MECHANICAL CODE (IMC) 2015 & SPS 364 AMENDMENTS
ELECTRICAL:
• NATIONAL ELECTRICAL CODE (NEC) 2017 & SPS 316 AMENDMENTS
FIRE:
• INTERNATIONAL FIRE CODE (IFC) 2015 & SPS 314 AMENDMENTS
FUEL:
• INTERNATIONAL FUEL GAS CODE (IFGC) 2015 & SPS 365 AMENDMENTS
ACCESSIBILITY:
• ANSI STANDARD A117.1-2009: FOR ACCESSIBILITY`],
  [2513, 'IBC - CHAPTER 3 USE AND OCCUPANCY\nCLASSIFICATION:', `SCOPE AREA:
• INSTITUTIONAL GROUP (I-4), DAY CARE FACILITIES (MOST RESTRICTIVE USE WITHIN SCOPE AREA)
OUTSIDE SCOPE AREA:
• BUSINESS GROUP (B)`],
  [2723, 'IBC - CHAPTER 5 CLASSIFICATION OF WORK', 'ALTERATION—LEVEL 2'],
  [2793, 'IBC - 504.3 HEIGHT IN FEET', 'FOR TYPE V-B (W/ SPRINKLERS):\n• ACTUAL: 39FT\n• ALLOWED:\n• (B): 60FT\n• (I-4): 60FT'],
  [3033, 'IBC - 504.4 NUMBER OF STORIES', '• ACTUAL: 3 STORIES\n• ALLOWED:\n• (B): 3 STORIES\n• (I-4): 2 STORIES'],
  [3237, 'IBC - 506.2 ALLOWABLE AREA DETERMINATION\n&\n506.3 FRONTAGE INCREASE:', `• ACTUAL: 40,000 SF (13,333SF PER FLOOR)
• (I-4): 5970 SF
• (B): 34030 SF
• ALLOWED:
• (I-4):
• COMPUTE AREA INCREASE DUE TO FRONTAGE: FRONTAGE COEFFICIENT, If = 0.75
• PERIMETER, P = 514 FT
• 'FRONTAGE' PERIMETER, F = 514 FT
• WEIGHTED AVERAGE DISTANCE FROM 'F' = 30 FT
• COMPUTE ALLOWABLE PER STORY AREA, AA = AT +(NS X IF) = 33750 SQ.FT.
• MAXIMUM ALLOWABLE AREA = AA X 2 = 67500 SQ.FT.
• (B):
• COMPUTE AREA INCREASE DUE TO FRONTAGE: FRONTAGE COEFFICIENT, If = 0.75
• PERIMETER, P = 514 FT
• 'FRONTAGE' PERIMETER, F = 514 FT
• WEIGHTED AVERAGE DISTANCE FROM 'F' = 30 FT
• COMPUTE ALLOWABLE PER STORY AREA, AA = AT +(NS X IF) = 33750 SQ.FT.
• MAXIMUM ALLOWABLE AREA = AA X 2 = 101250 SQ.FT.`],
  [4013, 'IBC - 508.3 NONSEPARATED OCCUPANCIES', 'NO'],
  [4093, 'IBC - 508.4 SEPARATED OCCUPANCIES', 'YES\n• 1 HR FLOOR BETWEEN (I-4) AND (B)'],
  [4213, 'IBC - TABLE 601\nFIRE-RESISTANCE RATING REQUIREMENTS\nBUILDING ELEMENTS (HOURS)', `FOR TYPE V-B:
STRUCTURAL FRAME: 0 HR
BEARING WALLS- EXTERIOR: 0 HR
BEARING WALLS-INTERIOR: 0 HR
NON-BEARING WALLS-EXTERIOR - (SEE TABLE-602)
NON-BEARING WALLS-INTERIOR: 0 HR
FLOOR CONSTRUCTION: 0 HR
ROOF CONSTRUCTION: 0 HR`],
  [4583, 'IBC - TABLE 602\nFIRE-RESISTANCE RATING REQUIREMENTS\nEXTERIOR WALLS BASED ON FIRE SEPARATION\nDISTANCE', 'FOR TYPE V-B:\nFIRE SEPARATION DISTANCE\n• X < 5C = 1 HR\n• 5 ≤ X ≤ 10 = 1 HR\n• 10 ≤ X ≤ 30 = 0 HR\n• X ≥ 30 = 0 HR'],
  [4863, 'IBC - 803.11 INTERIOR FINISH REQUIREMENTS\nBASED ON GROUP', 'FOR I-4:\nINTERIOR EXIT STAIRWAYS AND RAMPS AND EXIT PASSAGEWAYS: CLASS B\nCORRIDORS AND ENCLOSURE FOR EXIT ACCESS STAIRWAYS AND RAMPS: CLASS B\nROOMS AND ENCLOSED: CLASS B'],
  [5053, 'IBC - SPRINKLERS (SECTION 903 AUTOMATIC\nSPRINKLER SYSTEMS)', 'SPRINKLERS – NFPA 13'],
  [5173, 'IBC - TABLE 906.3(1) FIRE EXTINGUISHERS\nFOR CLASS A FIRE HAZARDS', `EVERYWHERE EXCEPT KITCHEN (IF APPLICABLE) - SEE TYPE K BELOW
TYPE OF HAZARD-OCCUPANCY: ORDINARY (MODERATE)
EXTINGUISHER SIZE & MAX. TRAVEL DISTANCES
• TYPE 2-A:
• MAXIMUM FLOOR AREA PER UNIT OF A: 1,500SF
• MAXIMUM FLOOR AREA FOR EXTINGUISHER: 11,250SF
• MAXIMUM DISTANCE TO EXTINGUISHER: 75FT
(IF APPLICABLE) COMM. KITCHENS W/ EQUIPMENT INVOLVING SOLID FUELS OR VEGETABLE OR ANIMAL
FATS:
TYPE OF HAZARD-OCCUPANCY: ORDINARY (MODERATE)
• TYPE K: 2.5-GALLON OR (2)1.5-GALLON (WITHIN 30FT OF COOKING EQUIPMENT)`],
  [5683, 'IBC - SECTION 907 FIRE ALARM AND DETECTION\nSYSTEMS', 'EXISTING: EXISTING MANUAL FIRE ALARM BOX IS CURRENTLY PRESENT. ANY NEW OR MODIFIED\nFIRE ALARM BOXES TO INTEGRATE WITH EXISTING ONES ON THE PREMISES.\nFIRE ALARM TO BE DESIGN/BUILT PER 3RD PARTY.'],
  [5883, 'IBC - SECTION 1004 OCCUPANT LOAD', 'SEE OCCUPANT LOAD ROOM SCHEDULE'],
  [5963, 'IBC - SECTION 1020 CORRIDORS', 'CORRIDORS: 0 HR RATED (W/ SPRINKLERS)'],
  [6053, 'IBC - 1006.2.1 EGRESS BASED ON OCCUPANT\nLOAD AND COMMON PATH OF EGRESS TRAVEL\nDISTANCE:', 'FOR I-4:\nMAXIMUM COMMON PATH WITH SPRINKLER SYSTEM: 75FT\nMAXIMUM OCCUPANT LOAD OF SPACE WITH ONE EXIT: 10'],
  [6223, 'IBC - SECTION 1017 EXIT ACCESS TRAVEL\nDISTANCE:', 'FOR I-4:\nFOR B: 200 FT (W/SPRINKLER)'],
  [6343, 'IBC - 1020.4 DEAD ENDS', '50 FEET W/ SPRINKLERS'],
  [6423, 'IEBC - 805.6 DEAD-END CORRIDORS', '50 FEET PER IEBC - 805.6'],
  [6523, '2902.1 MINIMUM NUMBER OF FIXTURES', `CLASSIFICATION: I-4
TOTAL OCCUPANTS: 82
FEMALE OCCUPANTS: 41
MALE OCCUPANTS: 41
• WATER CLOSETS: 1 PER 15
• WOMEN: 3 REQUIRED (3 PROVIDED)
• MEN: 3 REQUIRED (3 PROVIDED)
• LAVATORIES: 1 PER 15
• WOMEN: 3 REQUIRED (3 PROVIDED)
• MEN: 3 REQUIRED (3 PROVIDED)
• DRINKING FOUNTAINS: 1 PER 100
• (PROPOSED ALTERNATIVE: FAUCET IN KITCHEN)
• SERVICE SINK: 1 REQUIRED (1 PROVIDED)`]
];
let gd = 'M10790 1660V7173H13365V1660M11565 1660V7173';
rows.forEach(([y, a, b]) => {
  gd += `M10790 ${y}H13365`;
  block(10808, y + 41, 41, 40.5, 'blue', 'c4', a.split('\n'));
  block(11580, y + 41, 41, 40.5, 'blue', 'c5', b.split('\n'));
});
document.getElementById('grid').setAttribute('d', gd);

// Drawing titles
const tags = document.getElementById('tags');
[[2065, 3930, '5C', 'DEMO PLAN', '1/16"=1\'-0"'], [2275, 5770, '5B', 'DEMOLITION NOTES'], [2275, 7730, '5A', 'GENERAL RESTROOM NOTES'],
 [5365, 4010, '4C', 'ADA - ALT. ROLL-IN-TYPE SHOWER - BACK WALL'], [5210, 6470, '4B', 'ADA - ALT. ROLL-IN-TYPE SHOWER - END WALL'],
 [5210, 8480, '4A', 'W1 - FULL HEIGHT PARTITION - NOT RATED - HEAD', '3"=1\'-0"'], [7785, 8480, '3A', 'W1 - FULL HEIGHT PARTITION - NOT RATED - BASE', '3"=1\'-0"'],
 [7920, 4870, '3B', 'GENERAL NOTES'], [10785, 7280, '2A', 'CODE INFORMATION']].forEach(([x, y, n, t, s]) => {
  add(tags, 'rect', { class: 'tag', x, y, width: 360, height: 108, rx: 54 });
  add(tags, 'path', { class: 'tag', d: `M${x + 360} ${y + 54}h1465` });
  add(tags, 'text', { class: 'gothic', x: x + 180, y: y + 80, 'font-size': 74, 'text-anchor': 'middle' }, n + '/A000');
  add(tags, 'text', { class: 'gothic', x: x + 370, y: y + 36, 'font-size': 52 }, t);
  if (s) add(tags, 'text', { class: 'gothic', x: x + 375, y: y + 108, 'font-size': 52 }, s);
});

// Layer list
const list = document.getElementById('layers');
['g44898', 'g9', 'g13', 'g44655', 'g17', 'g15', 'g11434', 'g11', 'g11035', 'g3'].forEach(n => {
  const li = document.createElement('li');
  li.innerHTML = '<svg class="tri" viewBox="0 0 8 10"><path d="M2 0v10l4-5z" fill="#bbb"/></svg>' +
    '<svg viewBox="0 0 14 14"><path d="M1 2h5l1 2h6v9H1z" fill="none" stroke="#aaa" stroke-width="1.600"/></svg><span>' + n + '</span>' +
    (n === 'g3' ? '<svg class="lock" viewBox="0 0 14 14"><path d="M2 6h10v8H2z" fill="#eee"/><path d="M4 7V4q0-4 3-4t3 4v3" fill="none" stroke="#eee" stroke-width="2"/></svg>' : '') + '<i></i>';
  list.appendChild(li);
});

// Palette
const colors = `1a1a1a 333333 4d4d4d 666666 999999 b3b3b3 cccccc e6e6e6 ececec f2f2f2 f9f9f9
800000 ff0000 808000 ffff00 008000 00ff00 008080 00ffff 000080 0000ff 800080 ff00ff
2b0000 550000 800000 aa0000 d40000 ff0000 ff2a2a ff5555 ff8080 ffaaaa ffd5d5
280b0b 501616 782121 a02c2c c83737 d35f5f de8787 e9afaf f4d7d7
241c1c 483737 6c5353 916f6f ac9393 c8b7b7 e3dbdb
2b1100 552200 803300 aa4400 d45500 ff6600 ff7f2a ff9955 ffb380 ffccaa ffe6d5
28170b 502d16 784421 a05a2c c87137 d38d5f deaa87 e9c6af f4e3d7
241f1c 483e37 6c5d53 917c6f ac9d93 c8beb7 e3dedb
2b2200 554400 806600 aa8800 d4aa00 ffcc00 ffd42a ffdd55 ffe680 ffeeaa fff6d5
28220b 504416 786721 a0892c c8ab37 d3bc5f decd87 e9ddaf f4eed7
24221c 484537 6c6753`.split(/\s+/);
const sw = document.getElementById('swatches');
colors.forEach(c => {
  const i = document.createElement('i');
  i.style.background = '#' + c;
  sw.appendChild(i);
});
```
